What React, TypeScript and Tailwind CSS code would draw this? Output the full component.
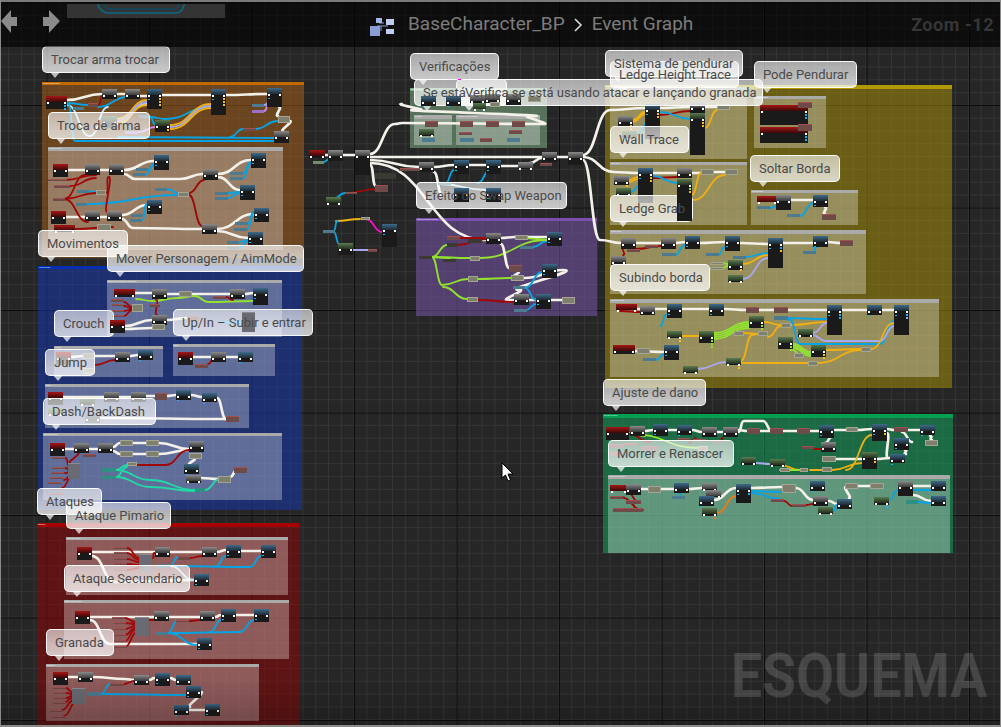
type Frame = [number, number, number, number, string, string, string];
type NodeT = [number, number, number, number, string, string?];
type Wire = [string, ...number[]];

const FRAMES: Frame[] = [
  // outer comment boxes
  [42, 82, 262, 176, 'h-[3px] bg-[#c46a00]', 'bg-[#a45d1b]/55', 'Trocar arma trocar'],
  [38, 266, 264, 244, 'h-[3px] bg-[#0030b0]', 'bg-[#1637a9]/55', 'Movimentos'],
  [37, 523, 263, 202, 'h-[4px] bg-[#a80000]', 'bg-[#8c0606]/55', 'Ataques'],
  [410, 88, 137, 60, 'h-[3px] bg-[#7dad85]', 'bg-[#7dad85]/55', 'Verificações'],
  [416, 218, 181, 98, 'h-[3px] bg-[#7b4fb0]', 'bg-[#7855ab]/55', 'Efeito do Swap Weapon'],
  [605, 85, 347, 303, 'h-[4px] bg-[#b09a00]', 'bg-[#a28c0b]/55', 'Sistema de pendurar'],
  [603, 414, 350, 139, 'h-[4px] bg-[#00a050]', 'bg-[#14a25d]/55', 'Ajuste de dano'],
  // inner comment boxes
  [48, 147, 235, 103, 'h-[4px] bg-[#aaaaaa]', 'bg-white/30', 'Troca de arma'],
  [107, 280, 175, 57, 'h-[3px] bg-[#aaaaaa]', 'bg-white/30', 'Mover Personagem / AimMode'],
  [54, 346, 109, 31, 'h-[3px] bg-[#aaaaaa]', 'bg-white/30', 'Crouch'],
  [173, 344, 102, 32, 'h-[3px] bg-[#aaaaaa]', 'bg-white/30', 'Up/In'],
  [45, 384, 204, 44, 'h-[3px] bg-[#aaaaaa]', 'bg-white/30', 'Jump'],
  [43, 433, 239, 67, 'h-[3px] bg-[#aaaaaa]', 'bg-white/30', 'Dash/BackDash'],
  [66, 537, 222, 58, 'h-[3px] bg-[#aaaaaa]', 'bg-white/30', 'Ataque Pimario'],
  [64, 600, 225, 59, 'h-[3px] bg-[#aaaaaa]', 'bg-white/30', 'Ataque Secundario'],
  [46, 664, 213, 57, 'h-[3px] bg-[#aaaaaa]', 'bg-white/30', 'Granada'],
  [414, 115, 38, 30, 'h-[4px] bg-[#aaaaaa]', 'bg-white/30', 'Se está'],
  [456, 115, 84, 30, 'h-[4px] bg-[#aaaaaa]', 'bg-white/30', 'Verifica se está usando'],
  [610, 87, 137, 72, 'h-[3px] bg-[#aaaaaa]', 'bg-white/30', 'Ledge Height Trace'],
  [610, 162, 137, 63, 'h-[3px] bg-[#aaaaaa]', 'bg-white/30', 'Wall Trace'],
  [754, 96, 72, 52, 'h-[3px] bg-[#aaaaaa]', 'bg-white/30', 'Pode Pendurar'],
  [751, 190, 107, 35, 'h-[3px] bg-[#aaaaaa]', 'bg-white/30', 'Soltar Borda'],
  [610, 230, 256, 64, 'h-[4px] bg-[#aaaaaa]', 'bg-white/30', 'Ledge Grab'],
  [610, 299, 329, 78, 'h-[4px] bg-[#aaaaaa]', 'bg-white/30', 'Subindo borda'],
  [608, 475, 342, 78, 'h-[4px] bg-[#aaaaaa]', 'bg-white/30', 'Morrer e Renascer'],
];

const WIRE_COLORS: Record<string, string> = {
  w: '#f4f1ea',
  b: '#06a4e4',
  y: '#eeb012',
  l: '#a8a8ee',
  r: '#a00808',
  g: '#92e030',
  t: '#22d8a8',
  p: '#c88ae0',
  m: '#f010c0',
  o: '#ee7a10',
  c: '#bfe6f2',
};

const WIRES: Wire[] = [
  // trocar arma
  ['w', 67, 100, 102, 94], ['w', 117, 94, 125, 94], ['w', 140, 96, 147, 96], ['w', 162, 95, 211, 95], ['w', 226, 95, 267, 94],
  ['w', 279, 107, 278, 116], ['w', 290, 121, 283, 131],
  ['c', 67, 105, 90, 136, 108, 107], ['c', 117, 124, 147, 104], ['p', 139, 132, 155, 127],
  ['b', 67, 103, 88, 105], ['b', 98, 107, 127, 97], ['b', 68, 104, 75, 141, 275, 141], ['b', 118, 137, 275, 138],
  ['b', 150, 117, 165, 119, 211, 107], ['b', 150, 117, 155, 124], ['b', 230, 137, 243, 129], ['b', 255, 129, 278, 121],
  ['r', 98, 105, 103, 96],
  ['y', 117, 119, 147, 100], ['y', 117, 123, 147, 105], ['l', 117, 121, 147, 102],
  ['y', 170, 125, 211, 104], ['l', 170, 127, 211, 106], ['y', 170, 129, 211, 108],
  ['p', 264, 111, 269, 104], ['l', 264, 105, 269, 103],
  // troca de arma
  ['w', 68, 170, 85, 170], ['w', 100, 170, 109, 170], ['w', 124, 170, 154, 161], ['w', 124, 174, 135, 179, 180, 179, 203, 174],
  ['w', 218, 174, 251, 160], ['w', 218, 177, 240, 190], ['w', 66, 217, 85, 217], ['w', 100, 217, 107, 217],
  ['w', 122, 215, 147, 205], ['w', 122, 219, 133, 228, 202, 229], ['w', 217, 229, 254, 214], ['w', 217, 231, 248, 238],
  ['b', 148, 170, 154, 164], ['b', 145, 175, 154, 165], ['b', 243, 173, 251, 162], ['b', 243, 178, 251, 163],
  ['b', 228, 193, 240, 192], ['b', 228, 198, 240, 193], ['b', 143, 215, 147, 204], ['b', 142, 220, 147, 205],
  ['b', 248, 223, 254, 212], ['b', 247, 229, 254, 213], ['b', 239, 242, 248, 240], ['b', 239, 248, 248, 241],
  ['b', 87, 204, 178, 195], ['b', 88, 191, 96, 192], ['b', 167, 189, 178, 193],
  ['r', 64, 199, 85, 175], ['r', 64, 199, 96, 193], ['r', 64, 199, 88, 222], ['r', 65, 180, 96, 175], ['r', 70, 186, 96, 178],
  ['r', 106, 193, 109, 177], ['r', 109, 177, 107, 212], ['r', 189, 195, 202, 226], ['r', 189, 193, 204, 180], ['r', 75, 229, 113, 227],
  // mover personagem
  ['w', 135, 293, 152, 293], ['w', 167, 294, 179, 294], ['w', 192, 294, 230, 294], ['w', 245, 294, 253, 293],
  ['w', 125, 326, 152, 320], ['w', 125, 329, 152, 328], ['w', 167, 320, 187, 318],
  ['g', 136, 299, 152, 301, 178, 298, 195, 296, 208, 302, 253, 301],
  ['r', 124, 302, 132, 307], ['r', 124, 306, 132, 308], ['r', 124, 311, 132, 309], ['r', 124, 316, 132, 310],
  ['r', 156, 300, 157, 315], ['r', 226, 297, 233, 300], ['b', 220, 322, 245, 323],
  ['w', 71, 357, 83, 356], ['w', 95, 356, 115, 356], ['w', 130, 356, 138, 355], ['r', 95, 365, 115, 360],
  ['w', 193, 357, 211, 357], ['w', 226, 357, 238, 357], ['r', 208, 364, 213, 360],
  // dash
  ['w', 63, 397, 104, 397], ['w', 119, 397, 131, 397], ['w', 146, 396, 155, 396], ['w', 167, 396, 176, 395], ['w', 191, 395, 202, 397],
  ['w', 217, 398, 226, 419], ['w', 100, 418, 226, 419],
  ['w', 65, 449, 74, 449], ['w', 89, 449, 98, 449], ['w', 113, 447, 120, 443], ['w', 133, 443, 146, 443], ['w', 159, 443, 189, 449],
  ['w', 113, 451, 120, 454], ['w', 133, 454, 146, 454], ['w', 159, 454, 189, 450], ['w', 194, 459, 190, 464], ['w', 201, 478, 218, 479], ['w', 230, 477, 237, 470],
  ['r', 137, 465, 165, 465, 189, 450], ['r', 65, 458, 70, 467], ['r', 65, 468, 70, 470], ['r', 65, 473, 70, 472], ['r', 64, 480, 72, 474], ['r', 62, 488, 72, 476], ['r', 78, 453, 70, 463],
  ['t', 116, 470, 127, 465], ['t', 116, 477, 127, 467], ['t', 116, 470, 150, 480, 195, 490], ['t', 116, 477, 150, 487, 195, 491], ['t', 205, 490, 220, 479],
  // ataques
  ['w', 92, 552, 155, 552], ['w', 170, 552, 202, 552], ['w', 217, 552, 226, 550], ['w', 241, 551, 261, 551], ['w', 92, 556, 115, 582, 194, 580],
  ['r', 127, 548, 139, 558], ['r', 127, 553, 139, 560], ['r', 127, 559, 139, 562], ['r', 127, 564, 139, 565], ['r', 127, 570, 139, 568], ['r', 152, 558, 155, 553], ['r', 190, 558, 202, 556],
  ['b', 170, 566, 178, 557], ['b', 170, 566, 250, 567, 261, 556], ['b', 215, 567, 226, 556], ['c', 170, 566, 194, 580],
  ['w', 90, 617, 154, 617], ['w', 169, 617, 200, 617], ['w', 215, 617, 221, 615], ['w', 236, 615, 254, 615], ['w', 90, 620, 110, 644, 197, 644],
  ['r', 125, 618, 135, 622], ['r', 125, 623, 135, 624], ['r', 125, 629, 135, 626], ['r', 125, 635, 135, 628], ['r', 125, 641, 135, 630], ['r', 125, 647, 137, 632], ['r', 149, 620, 154, 620], ['r', 189, 621, 200, 620],
  ['b', 168, 633, 177, 621], ['b', 168, 633, 240, 632, 254, 620], ['b', 168, 633, 197, 645], ['b', 210, 632, 221, 620],
  ['w', 68, 677, 78, 677], ['w', 93, 677, 125, 679, 134, 680], ['w', 149, 680, 155, 678], ['w', 170, 678, 176, 680], ['w', 201, 692, 190, 707], ['w', 189, 710, 205, 710],
  ['r', 66, 688, 72, 692], ['r', 66, 693, 72, 694], ['r', 66, 698, 72, 696], ['r', 64, 703, 72, 698], ['r', 62, 710, 74, 700], ['r', 64, 716, 76, 702], ['r', 124, 684, 134, 681],
  ['b', 101, 694, 110, 684], ['b', 101, 694, 186, 695],
  // central
  ['w', 325, 155, 328, 155], ['w', 343, 155, 355, 155], ['b', 323, 162, 330, 159],
  ['w', 370, 154, 395, 124, 402, 123, 544, 124], ['w', 544, 124, 528, 116, 420, 110, 402, 104],
  ['w', 370, 157, 542, 157], ['w', 557, 157, 568, 157], ['w', 370, 160, 419, 167], ['w', 434, 167, 454, 165], ['w', 469, 165, 486, 165], ['w', 501, 166, 518, 166],
  ['w', 530, 163, 542, 158], ['w', 370, 163, 486, 240], ['w', 370, 165, 376, 186], ['w', 434, 172, 442, 195], ['c', 440, 184, 486, 190],
  ['b', 445, 184, 454, 170], ['b', 478, 183, 490, 170],
  ['r', 400, 170, 419, 169], ['r', 345, 193, 378, 189], ['b', 333, 199, 345, 193],
  ['y', 336, 221, 360, 219], ['m', 366, 219, 382, 232], ['b', 333, 231, 338, 221], ['b', 333, 231, 340, 245], ['l', 353, 250, 368, 250],
  // efeito
  ['r', 460, 238, 486, 238], ['r', 458, 245, 486, 239], ['w', 501, 238, 515, 237], ['w', 528, 237, 547, 237], ['b', 533, 247, 547, 241],
  ['g', 432, 257, 447, 245], ['g', 432, 257, 450, 258], ['g', 432, 257, 470, 258], ['g', 480, 258, 547, 240, 528, 238],
  ['g', 432, 257, 442, 285, 468, 279], ['g', 478, 279, 511, 278], ['w', 501, 244, 509, 268], ['w', 518, 272, 514, 277],
  ['w', 524, 278, 563, 270, 520, 290, 507, 300, 514, 300], ['g', 443, 287, 467, 299], ['r', 478, 300, 514, 302],
  ['w', 529, 300, 536, 300], ['w', 551, 300, 562, 300], ['b', 525, 288, 536, 300], ['b', 525, 288, 542, 272], ['b', 526, 310, 536, 304],
  // pendurar
  ['w', 583, 155, 610, 110, 645, 108], ['w', 583, 157, 614, 172, 638, 173], ['w', 583, 160, 600, 240, 621, 243], ['w', 660, 108, 690, 107], ['w', 705, 107, 717, 107],
  ['y', 633, 120, 645, 112], ['y', 633, 122, 645, 114], ['b', 637, 134, 650, 120], ['r', 660, 115, 690, 111], ['b', 660, 112, 690, 119],
  ['y', 705, 128, 717, 110],
  ['w', 653, 173, 677, 173], ['w', 692, 173, 701, 173], ['w', 714, 172, 725, 172],
  ['y', 629, 180, 638, 177], ['y', 629, 182, 638, 179], ['b', 631, 192, 640, 185], ['r', 653, 178, 677, 177], ['b', 653, 176, 677, 183],
  ['y', 692, 195, 701, 173], ['y', 693, 200, 725, 175],
  ['w', 777, 200, 813, 200], ['w', 825, 207, 825, 214], ['b', 770, 208, 776, 206], ['b', 800, 216, 813, 203],
  ['w', 636, 243, 661, 243], ['w', 676, 243, 685, 242], ['w', 700, 243, 725, 242], ['w', 740, 243, 768, 244], ['w', 783, 243, 813, 243], ['w', 828, 242, 840, 243],
  ['r', 636, 249, 661, 246], ['r', 623, 255, 624, 248], ['b', 675, 255, 685, 245], ['b', 718, 255, 725, 247], ['b', 745, 257, 768, 253], ['y', 743, 264, 768, 255], ['l', 743, 279, 768, 258], ['b', 812, 252, 817, 247], ['g', 722, 263, 728, 264], ['g', 722, 268, 728, 266],
  ['w', 637, 309, 667, 309], ['w', 682, 309, 709, 309], ['w', 724, 309, 746, 310], ['w', 759, 310, 774, 310], ['w', 788, 310, 827, 310], ['w', 842, 310, 867, 310], ['w', 882, 310, 894, 310],
  ['r', 620, 311, 640, 312], ['b', 660, 326, 667, 314], ['g', 714, 333, 749, 322], ['g', 714, 335, 749, 324], ['g', 714, 337, 749, 326], ['g', 714, 339, 749, 328],
  ['y', 682, 336, 699, 336], ['y', 764, 322, 781, 325], ['y', 791, 325, 827, 322], ['b', 780, 318, 790, 320], ['b', 790, 320, 800, 344, 880, 344, 894, 321], ['b', 784, 318, 827, 319], ['y', 744, 333, 758, 334], ['l', 813, 333, 827, 323], ['l', 812, 335, 826, 341, 880, 341, 894, 326],
  ['y', 741, 361, 752, 335, 758, 334], ['y', 741, 363, 808, 363], ['y', 818, 363, 861, 350], ['y', 826, 350, 861, 349], ['y', 871, 349, 894, 323], ['g', 793, 344, 811, 352], ['g', 793, 346, 811, 354], ['g', 793, 348, 811, 356], ['y', 768, 337, 781, 326], ['l', 698, 369, 726, 362],
  ['w', 635, 351, 664, 352], ['b', 656, 360, 664, 354], ['g', 793, 350, 800, 355],
  // ajuste de dano
  ['w', 645, 431, 653, 430], ['w', 668, 430, 677, 430], ['w', 692, 430, 702, 432], ['w', 717, 432, 723, 432], ['w', 738, 430, 747, 431], ['w', 760, 431, 770, 431], ['w', 783, 431, 797, 431], ['w', 810, 431, 819, 431], ['w', 738, 432, 744, 421, 763, 421, 772, 431],
  ['w', 834, 430, 846, 430], ['w', 825, 443, 832, 437], ['w', 858, 430, 872, 429], ['w', 887, 429, 894, 430], ['w', 908, 430, 920, 430], ['w', 887, 433, 888, 458], ['w', 836, 459, 862, 459], ['w', 877, 459, 890, 458], ['w', 930, 436, 932, 440], ['w', 902, 432, 912, 442], ['w', 905, 450, 906, 454],
  ['y', 846, 470, 872, 435], ['y', 832, 470, 862, 463], ['y', 780, 465, 800, 470], ['g', 780, 470, 800, 470], ['l', 756, 463, 770, 464], ['y', 810, 470, 822, 470],
  ['g', 629, 433, 645, 436], ['g', 631, 434, 700, 448], ['r', 629, 434, 650, 442], ['r', 814, 449, 821, 449],
  ['r', 695, 438, 690, 443], ['r', 720, 441, 723, 438],
  ['w', 627, 489, 648, 489], ['w', 661, 489, 674, 489], ['w', 689, 489, 702, 488], ['w', 714, 500, 736, 488], ['w', 751, 488, 782, 487], ['w', 796, 488, 813, 500], ['w', 829, 501, 837, 504], ['w', 849, 498, 846, 487], ['w', 858, 486, 870, 486], ['w', 913, 495, 931, 501], ['w', 913, 486, 931, 486],
  ['b', 680, 497, 680, 490], ['b', 751, 491, 782, 492], ['o', 717, 513, 736, 496], ['b', 751, 493, 780, 499], ['r', 784, 501, 792, 506], ['r', 806, 505, 813, 504], ['b', 833, 511, 837, 505],
  ['b', 889, 500, 898, 490], ['b', 913, 490, 931, 490], ['b', 918, 502, 931, 503],
  ['r', 626, 491, 640, 503], ['r', 620, 497, 643, 510], ['r', 630, 502, 638, 510],
];

const NODES: NodeT[] = [
  // trocar arma
  [46, 96, 21, 13, 'r', 'bb'], [102, 89, 15, 10, 'g'], [125, 89, 15, 10, 'g'], [147, 89, 15, 20, 'b', 'yyy'], [211, 89, 15, 26, 'b', 'yyy'], [267, 88, 15, 19, 'b'],
  [102, 116, 15, 12, 'e', 'y'], [155, 120, 15, 12, 'e', 'y'], [274, 131, 15, 12, 'g'], [88, 103, 10, 4, 'v'], [73, 107, 11, 3, 'l'], [139, 115, 11, 3, 'l'], [125, 131, 13, 3, 'p'], [243, 128, 13, 3, 'v'], [252, 104, 12, 3, 'l'], [252, 110, 12, 3, 'p'], [278, 116, 12, 7, 'k'],
  // troca de arma
  [53, 164, 15, 13, 'r'], [85, 164, 15, 11, 'g'], [109, 164, 15, 11, 'g'], [154, 155, 15, 15, 'b'], [251, 153, 15, 15, 'b'], [203, 169, 15, 11, 'g'], [240, 185, 15, 15, 'b'],
  [51, 211, 15, 13, 'r'], [85, 211, 15, 10, 'g'], [107, 211, 15, 10, 'g'], [147, 200, 15, 14, 'b'], [202, 224, 15, 10, 'g'], [254, 208, 15, 14, 'b'], [248, 232, 15, 14, 'b'],
  [96, 190, 10, 5, 'k'], [178, 192, 11, 5, 'k'], [76, 203, 11, 3, 'l'], [77, 190, 12, 3, 'l'], [155, 188, 12, 3, 'l'], [136, 168, 12, 3, 'l'], [133, 173, 12, 3, 'l'], [230, 172, 13, 3, 'l'], [230, 177, 13, 3, 'l'], [215, 192, 13, 3, 'l'], [215, 197, 13, 3, 'l'], [131, 214, 12, 3, 'l'], [130, 219, 12, 3, 'l'], [235, 222, 13, 3, 'l'], [234, 228, 13, 3, 'l'], [227, 241, 12, 3, 'l'], [227, 247, 12, 2, 'l'],
  [48, 179, 19, 2, 'v'], [54, 185, 16, 3, 'v'], [53, 198, 12, 3, 'v'], [54, 225, 21, 7, 'r'], [97, 224, 14, 7, 'k'],
  // movimentos
  [114, 289, 21, 8, 'r'], [152, 289, 15, 10, 'g'], [230, 289, 15, 10, 'g'], [253, 288, 15, 17, 'b'], [179, 291, 13, 6, 'k'], [152, 315, 15, 10, 'g'], [152, 324, 13, 6, 'k'], [132, 304, 11, 8, 'k'], [150, 304, 10, 3, 'v'], [111, 299, 13, 3, 'v'], [112, 304, 12, 2, 'v'], [112, 310, 12, 2, 'v'], [112, 315, 12, 2, 'v'], [213, 296, 13, 3, 'v'], [187, 316, 12, 6, 'v'],
  [56, 352, 15, 13, 'r'], [83, 353, 12, 6, 'k'], [83, 368, 12, 6, 'k'], [115, 352, 15, 10, 'g'], [138, 350, 15, 10, 'b'], [178, 352, 15, 13, 'r'], [211, 352, 15, 10, 'g'], [238, 352, 15, 10, 'b'], [195, 364, 13, 4, 'v'],
  [48, 392, 15, 13, 'r'], [80, 398, 15, 7, 'e'], [104, 392, 15, 10, 'g'], [131, 392, 15, 10, 'g'], [155, 393, 12, 7, 'v'], [176, 390, 15, 10, 'b'], [202, 393, 15, 9, 'b'], [48, 408, 15, 7, 'e'], [85, 413, 15, 10, 'b'], [226, 416, 13, 6, 'v'],
  [50, 443, 15, 13, 'r'], [74, 443, 15, 10, 'g'], [98, 443, 15, 10, 'g'], [120, 440, 13, 6, 'k'], [146, 440, 13, 6, 'k'], [120, 451, 13, 6, 'k'], [146, 451, 13, 6, 'k'], [189, 441, 15, 11, 'g'], [189, 453, 13, 6, 'k'], [184, 464, 15, 10, 'b'], [186, 475, 15, 8, 'g'], [218, 476, 13, 7, 'k'], [234, 467, 13, 6, 'v'], [195, 488, 10, 4, 't'], [127, 462, 10, 4, 'k'], [102, 468, 14, 4, 't'], [102, 476, 14, 3, 't'], [68, 463, 12, 16, 'q'],
  [52, 457, 13, 2, 'v'], [52, 467, 13, 2, 'v'], [51, 472, 13, 2, 'v'], [50, 477, 13, 2, 'v'], [48, 482, 13, 2, 'v'], [50, 488, 13, 2, 'v'], [50, 493, 13, 2, 'v'], [83, 454, 13, 3, 'v'],
  // ataques
  [77, 547, 15, 13, 'r'], [155, 547, 15, 10, 'g'], [202, 547, 15, 10, 'g'], [226, 545, 15, 13, 'b'], [261, 545, 15, 13, 'b'], [194, 574, 15, 12, 'b'], [139, 554, 13, 18, 'q'], [157, 564, 13, 4, 'l'], [178, 556, 12, 4, 'v'],
  [114, 547, 13, 2, 'v'], [114, 552, 13, 2, 'v'], [114, 558, 13, 2, 'v'], [114, 563, 13, 2, 'v'], [114, 569, 13, 2, 'v'],
  [75, 611, 15, 13, 'r'], [154, 611, 15, 10, 'g'], [200, 611, 15, 10, 'g'], [221, 609, 15, 13, 'b'], [254, 609, 15, 13, 'b'], [197, 638, 15, 12, 'b'], [135, 617, 14, 19, 'q'], [155, 632, 13, 3, 'l'], [176, 620, 13, 2, 'v'],
  [112, 617, 13, 2, 'v'], [114, 622, 12, 2, 'v'], [114, 628, 12, 2, 'v'], [114, 634, 12, 2, 'v'], [114, 640, 12, 2, 'v'], [114, 646, 13, 2, 'v'],
  [53, 672, 15, 13, 'r'], [78, 672, 15, 10, 'g'], [134, 675, 15, 10, 'g'], [155, 673, 15, 13, 'b'], [176, 675, 15, 10, 'b'], [186, 686, 15, 12, 'b'], [174, 705, 15, 10, 'b'], [205, 704, 15, 12, 'b'], [72, 688, 13, 16, 'q'], [88, 692, 13, 4, 'l'], [110, 683, 14, 3, 'v'],
  [53, 687, 13, 2, 'v'], [53, 692, 13, 2, 'v'], [53, 697, 13, 2, 'v'], [53, 702, 13, 2, 'v'], [50, 710, 13, 2, 'v'], [52, 716, 14, 2, 'v'],
  // verificacoes
  [425, 121, 13, 6, 'v'], [419, 129, 15, 7, 'e'], [422, 138, 13, 4, 'l'], [460, 121, 13, 6, 'v'], [486, 121, 13, 6, 'v'], [512, 121, 13, 6, 'v'], [459, 132, 13, 3, 'v'], [460, 138, 14, 4, 'l'], [480, 138, 12, 4, 'v'], [509, 130, 13, 4, 'v'], [507, 138, 13, 4, 'l'],
  // central
  [309, 150, 16, 8, 'r'], [328, 150, 15, 11, 'g'], [355, 150, 15, 25, 'g'], [313, 161, 11, 3, 'd'], [542, 152, 15, 10, 'g'], [568, 152, 15, 13, 'g'], [540, 163, 12, 3, 'v'], [419, 162, 15, 10, 'g'], [454, 160, 15, 14, 'b'], [486, 160, 15, 14, 'b'], [518, 162, 15, 7, 'g'],
  [375, 173, 21, 6, 'n'], [400, 168, 20, 3, 'v'], [375, 185, 13, 7, 'v'], [326, 197, 15, 7, 'e'], [345, 192, 12, 2, 'v'], [438, 182, 13, 3, 'l'],
  [323, 230, 12, 3, 'l'], [361, 217, 9, 3, 'k'], [382, 224, 15, 23, 'b'], [338, 243, 15, 12, 'e'], [368, 249, 9, 3, 'v'],
  // efeito
  [486, 233, 15, 11, 'g'], [515, 235, 13, 5, 'k'], [547, 232, 15, 14, 'b'], [447, 236, 13, 4, 'v'], [468, 239, 14, 4, 'n'], [447, 243, 10, 4, 'n'], [520, 246, 13, 3, 'l'], [419, 256, 13, 3, 'n'], [443, 259, 13, 3, 'n'], [470, 256, 10, 5, 'k'], [509, 265, 13, 7, 'v'], [511, 275, 13, 6, 'k'], [542, 264, 15, 14, 'b'], [468, 276, 10, 6, 'k'], [513, 286, 12, 3, 'l'], [467, 297, 11, 5, 'k'], [514, 294, 15, 11, 'g'], [536, 294, 15, 15, 'b'], [562, 297, 13, 7, 'k'], [514, 309, 13, 3, 'l'],
  // pendurar
  [618, 116, 15, 10, 'g', 'yy'], [622, 131, 15, 7, 'e'], [645, 104, 15, 35, 'b', 'yy'], [690, 102, 15, 11, 'g'], [717, 104, 13, 6, 'k'],
  [614, 176, 15, 9, 'g', 'yy'], [616, 188, 15, 8, 'e'], [638, 168, 15, 35, 'b', 'yy'], [677, 168, 15, 10, 'g'], [701, 169, 13, 6, 'k'], [725, 169, 13, 6, 'k'],
  [760, 105, 48, 20, 'r', 'bb'], [760, 127, 48, 16, 'r', 'bb'], [798, 102, 14, 6, 'v'], [798, 124, 14, 7, 'v'],
  [757, 196, 20, 6, 'r'], [776, 195, 15, 15, 'g'], [813, 195, 15, 12, 'b'], [757, 206, 13, 3, 'l'], [787, 214, 13, 3, 'l'], [822, 214, 14, 6, 'v'],
  [621, 238, 15, 11, 'g'], [661, 238, 15, 11, 'g'], [685, 236, 15, 13, 'b'], [725, 236, 15, 15, 'b'], [768, 238, 15, 30, 'b', 'by'], [813, 236, 15, 11, 'b'], [840, 240, 13, 6, 'v'], [611, 256, 15, 9, 'g'], [627, 249, 13, 3, 'v'], [645, 245, 13, 3, 'v'], [662, 253, 14, 3, 'l'], [706, 253, 13, 3, 'l'], [733, 256, 13, 3, 'l'], [803, 251, 13, 3, 'l'], [728, 260, 15, 10, 'e', 'y'], [728, 275, 15, 7, 'e'], [710, 262, 14, 3, 'k'], [710, 267, 14, 3, 'k'],
  [616, 304, 21, 6, 'r'], [640, 306, 15, 9, 'g'], [667, 304, 15, 14, 'b'], [709, 304, 15, 12, 'b'], [746, 307, 13, 6, 'v'], [774, 307, 14, 6, 'v'], [827, 305, 15, 30, 'b', 'bb'], [867, 305, 15, 10, 'b'], [894, 305, 15, 30, 'b', 'bl'], [749, 316, 15, 12, 'e', 'ggg'], [781, 323, 10, 5, 'k'], [774, 316, 14, 4, 'l'], [667, 331, 15, 7, 'e', 'y'], [699, 331, 15, 12, 'e', 'ggg'], [734, 331, 10, 5, 'k'], [758, 331, 10, 5, 'k'], [798, 329, 15, 8, 'e'], [778, 337, 15, 12, 'e', 'gg'], [811, 345, 15, 12, 'e', 'yy'], [794, 353, 10, 5, 'k'], [861, 347, 10, 5, 'k'], [808, 361, 10, 5, 'k'], [613, 345, 22, 9, 'r'], [637, 348, 13, 6, 'k'], [664, 345, 15, 15, 'b'], [643, 358, 13, 3, 'l'], [726, 358, 15, 7, 'e', 'y'], [683, 366, 15, 7, 'e'],
  // ajuste de dano
  [606, 427, 23, 13, 'r'], [630, 426, 15, 10, 'g'], [653, 424, 15, 12, 'b'], [677, 425, 15, 10, 'b'], [702, 427, 15, 10, 'g'], [723, 427, 15, 10, 'g'], [747, 428, 13, 6, 'v'], [770, 428, 13, 6, 'v'], [797, 428, 13, 6, 'v'], [819, 425, 15, 13, 'b'], [821, 442, 15, 10, 'g'], [846, 427, 12, 5, 'k'], [872, 424, 15, 17, 'b', 'y'], [894, 427, 14, 5, 'v'], [920, 425, 15, 10, 'b'], [925, 440, 13, 6, 'k'], [894, 438, 15, 12, 'b'], [890, 454, 15, 9, 'b'], [862, 452, 15, 17, 'e', 'y'], [822, 456, 14, 6, 'k'], [741, 457, 15, 8, 'e'], [770, 459, 15, 7, 'e', 'y'], [780, 468, 10, 4, 'k'], [800, 468, 8, 4, 'k'], [822, 467, 10, 5, 'k'], [802, 446, 12, 3, 'v'], [610, 444, 13, 4, 'v'], [624, 443, 14, 3, 'v'], [610, 452, 13, 4, 'v'], [642, 446, 15, 5, 'v'], [698, 446, 10, 5, 'k'], [677, 438, 13, 3, 'v'], [693, 439, 13, 3, 'v'], [712, 440, 14, 3, 'v'],
  [610, 485, 17, 6, 'r'], [626, 484, 15, 11, 'g'], [648, 486, 13, 7, 'k'], [674, 483, 15, 10, 'b'], [672, 496, 13, 3, 'l'], [702, 483, 15, 7, 'g'], [706, 490, 15, 7, 'g'], [699, 496, 15, 10, 'b'], [702, 508, 15, 8, 'e', 'o'], [736, 484, 15, 19, 'b', 'b'], [782, 484, 14, 9, 'k'], [810, 481, 15, 10, 'b'], [813, 496, 15, 10, 'g'], [837, 499, 15, 10, 'b'], [818, 507, 15, 7, 'e'], [845, 483, 13, 6, 'k'], [870, 483, 14, 6, 'k'], [898, 481, 15, 15, 'g'], [931, 481, 15, 10, 'b'], [931, 496, 15, 10, 'b'], [874, 497, 15, 8, 'e', 'b'], [906, 500, 12, 4, 't'], [610, 496, 13, 3, 'v'], [626, 500, 15, 4, 'v'], [613, 508, 30, 4, 'v'], [771, 499, 13, 3, 'v'], [792, 504, 14, 3, 'v'],
];

// these show in front of the bubble fill, the bubble text stays readable on top
const OVER_NODES: NodeT[] = [
  [421, 96, 15, 10, 'b'], [446, 96, 15, 10, 'b'], [470, 95, 15, 8, 'g'], [485, 94, 15, 9, 'g'], [506, 94, 15, 11, 'g'], [528, 96, 13, 6, 'k'], [473, 103, 13, 3, 'e'], [490, 102, 10, 5, 'k'],
  [110, 320, 15, 13, 'r'], [242, 312, 13, 20, 'q'], [454, 188, 15, 14, 'b'], [486, 188, 15, 14, 'b'], [690, 113, 15, 42, 'e', 'yy'], [677, 179, 15, 42, 'e', 'gy'],
];

const BUBBLES: [number, number, number, string][] = [
  [42, 46, 128, 'Trocar arma trocar'],
  [48, 112, 102, 'Troca de arma'],
  [38, 230, 90, 'Movimentos'],
  [107, 245, 197, 'Mover Personagem / AimMode'],
  [54, 310, 60, 'Crouch'],
  [173, 309, 140, 'Up/In – Subir e entrar'],
  [45, 349, 50, 'Jump'],
  [43, 398, 113, 'Dash/BackDash'],
  [37, 488, 65, 'Ataques'],
  [66, 502, 105, 'Ataque Pimario'],
  [64, 565, 126, 'Ataque Secundario'],
  [46, 629, 68, 'Granada'],
  [410, 53, 89, 'Verificações'],
  [414, 79, 93, 'Se está'],
  [456, 79, 307, 'Verifica se está usando atacar e lançando granada'],
  [416, 182, 151, 'Efeito do Swap Weapon'],
  [605, 50, 138, 'Sistema de pendurar'],
  [610, 61, 129, 'Ledge Height Trace'],
  [754, 61, 103, 'Pode Pendurar'],
  [610, 126, 79, 'Wall Trace'],
  [750, 155, 90, 'Soltar Borda'],
  [610, 195, 83, 'Ledge Grab'],
  [610, 264, 100, 'Subindo borda'],
  [603, 379, 103, 'Ajuste de dano'],
  [608, 440, 126, 'Morrer e Renascer'],
];

const HEADER: Record<string, string> = {
  g: 'from-[#8c8c8c] to-[#3c3c3c]',
  b: 'from-[#3f6c8c] to-[#1e2a33]',
  r: 'from-[#a81616] to-[#3a0808]',
  e: 'from-[#5c7c50] to-[#24301f]',
};

const SMALL: Record<string, string> = {
  l: 'bg-[#4c7a8e]',
  p: 'bg-[#9a70c8]',
  v: 'bg-[#6e4a48] border-t border-[#a05050]',
  k: 'bg-[#7f7f6e] border border-[#a4a494]',
  t: 'bg-[#2f8f80]',
  d: 'bg-[#6f8f6a]',
  n: 'bg-[#3a3a32]',
  q: 'bg-[#6a6a72] border-t border-[#8a8a90]',
};

const PIN: Record<string, string> = {
  b: 'bg-[#16b4f4]',
  y: 'bg-[#f4c020]',
  g: 'bg-[#92e030]',
  l: 'bg-[#a8a8ee]',
  o: 'bg-[#ee7a10]',
};

function wirePath(pts: number[]) {
  let d = `M${pts[0]} ${pts[1]}`;
  for (let i = 2; i < pts.length; i += 2) {
    const x0 = pts[i - 2];
    const y0 = pts[i - 1];
    const x1 = pts[i];
    const y1 = pts[i + 1];
    const bend = Math.max(Math.abs(x1 - x0) * 0.5, 4);
    d += ` C${x0 + bend} ${y0} ${x1 - bend} ${y1} ${x1} ${y1}`;
  }
  return d;
}

function GraphNode({ node }: { node: NodeT }) {
  const [x, y, w, h, type, pins] = node;
  const pos = { left: x, top: y, width: w, height: h };
  if (SMALL[type]) {
    return <div className={`absolute ${SMALL[type]}`} style={pos} />;
  }
  return (
    <div className="absolute flex flex-col bg-[#1a1a1a]" style={pos}>
      <div className={`h-[6px] shrink-0 bg-gradient-to-b ${HEADER[type]}`} />
      <div className="flex grow justify-between px-px">
        <div className="flex flex-col gap-[2px]">
          <span className="h-[2px] w-[2px] bg-white" />
          {type === 'b' && <span className="h-[1px] w-[2px] bg-[#16b4f4]" />}
        </div>
        <div className="flex flex-col gap-[1px]">
          <span className="h-[2px] w-[2px] bg-white" />
          {(pins ?? '').split('').map((p, i) => (
            <span key={i} className={`h-[2px] w-[2px] ${PIN[p]}`} />
          ))}
        </div>
      </div>
    </div>
  );
}

function CommentFrame({ frame }: { frame: Frame }) {
  const [x, y, w, h, head, body, title] = frame;
  return (
    <div className={`absolute flex flex-col ${body}`} style={{ left: x, top: y, width: w, height: h }}>
      <div className={`shrink-0 overflow-hidden ${head}`}>
        <span className="block pl-px text-[2px] leading-[3px] text-white/80">{title}</span>
      </div>
    </div>
  );
}

function BubbleFill({ x, y, w }: { x: number; y: number; w: number }) {
  return (
    <div
      className="absolute h-[27px] rounded-[5px] border border-white/90 bg-gradient-to-b from-white/60 to-white/75"
      style={{ left: x, top: y, width: w }}
    >
      <span className="absolute left-[7px] top-full h-0 w-0 border-x-[5px] border-t-[6px] border-x-transparent border-t-white/70" />
    </div>
  );
}

function BubbleText({ x, y, text }: { x: number; y: number; text: string }) {
  return (
    <span
      className="absolute whitespace-nowrap pl-[9px] text-[13px] leading-[27px] text-[#4a4a4a]"
      style={{ left: x, top: y }}
    >
      {text}
    </span>
  );
}

export default function App() {
  return (
    <div className="relative h-[727px] w-[1001px] overflow-hidden bg-[#262626] font-['Roboto',sans-serif]">
      {/* grid */}
      <div className="absolute inset-0 bg-[linear-gradient(to_right,#0c0c0c_1px,transparent_1px),linear-gradient(to_bottom,#0c0c0c_1px,transparent_1px),linear-gradient(to_right,#353535_1px,transparent_1px),linear-gradient(to_bottom,#353535_1px,transparent_1px)] bg-[position:46.5px_2.5px,46.5px_2.5px,46.5px_2.5px,46.5px_2.5px] bg-[size:102.5px_102.5px,102.5px_102.5px,12.81px_12.81px,12.81px_12.81px]" />

      {FRAMES.map((f) => (
        <CommentFrame key={f[6]} frame={f} />
      ))}

      <svg className="absolute left-0 top-0" width={1001} height={727} fill="none" strokeLinecap="round">
        {WIRES.map(([c, ...pts], i) => (
          <path key={i} d={wirePath(pts)} stroke={WIRE_COLORS[c]} strokeWidth={c === 'w' ? 2.7 : 1.8} />
        ))}
      </svg>

      {NODES.map((n, i) => (
        <GraphNode key={i} node={n} />
      ))}

      {BUBBLES.map(([x, y, w, t]) => (
        <BubbleFill key={t} x={x} y={y} w={w} />
      ))}

      {OVER_NODES.map((n, i) => (
        <GraphNode key={i} node={n} />
      ))}

      {BUBBLES.map(([x, y, , t]) => (
        <BubbleText key={t} x={x} y={y} text={t} />
      ))}

      {/* watermark */}
      <div className="absolute left-[731px] top-[636px] origin-left scale-x-[0.89] whitespace-nowrap text-[62px] font-bold leading-[80px] text-white/15">
        ESQUEMA
      </div>
      <div className="absolute inset-x-0 bottom-0 h-[50px] bg-gradient-to-t from-black/20 to-transparent" />

      {/* title bar */}
      <div className="absolute inset-x-0 top-0 flex h-[47px] items-center border-t-2 border-[#7a7a7a] bg-black/65">
        <svg width={66} height={30} viewBox="0 0 66 30" className="mt-[-2px] shrink-0" fill="#8a8a8a">
          <path d="M1 12 L11 1 V8 H17 V17 H11 V24 Z" />
          <path d="M60 12 L49 1 V8 H43 V17 H49 V24 Z" />
        </svg>
        <div className="ml-[1px] mt-[-27px] h-[14px] w-[158px] shrink-0 overflow-hidden bg-[#343434]">
          <svg width={158} height={14} fill="none">
            <path d="M30 -2 C32 6 36 9 42 9 H108 C114 9 116 6 118 -2" stroke="#0b6a86" strokeWidth={1.5} />
            <path d="M36 -2 C37 3 40 5 44 5 H106 C110 5 111 3 112 -2" stroke="#0a4a62" strokeWidth={1.5} />
          </svg>
        </div>
        <svg width={24} height={18} viewBox="0 0 24 18" className="ml-[145px] mt-[4px] shrink-0">
          <path d="M9 5 H14 M7 11 V8 H18 M11 8 V13" stroke="#8a9ac8" strokeWidth={1} fill="none" />
          <rect x={6} y={0} width={6} height={5} fill="#a4b4e4" />
          <rect x={16} y={1} width={8} height={6} fill="#c0ccf0" />
          <rect x={16} y={11} width={8} height={5} fill="#c0ccf0" />
          <rect x={0} y={8} width={10} height={10} fill="#8c9cd4" />
        </svg>
        <span className="ml-[14px] text-[19px] text-[#7c7c7c]">BaseCharacter_BP</span>
        <svg width={10} height={16} viewBox="0 0 10 16" fill="none" className="ml-[8px] shrink-0">
          <path d="M2 2 L8 8 L2 14" stroke="#d8d8d8" strokeWidth={1.6} />
        </svg>
        <span className="ml-[9px] text-[19px] text-[#7c7c7c]">Event Graph</span>
        <span className="ml-auto mr-[7px] text-[18px] font-bold tracking-[0.5px] text-[#363636]">Zoom -12</span>
      </div>

      {/* window edge */}
      <div className="absolute inset-0 border-x border-b-2 border-[#8a8a8a]" />

      {/* mouse cursor */}
      <svg className="absolute left-[500px] top-[461px]" width={16} height={22} viewBox="0 0 16 22">
        <path d="M2 2 V17 L5.5 14 L8 20 L10.5 19 L8 13 H13 Z" fill="#fff" stroke="#000" strokeWidth={1} />
      </svg>
    </div>
  );
}
